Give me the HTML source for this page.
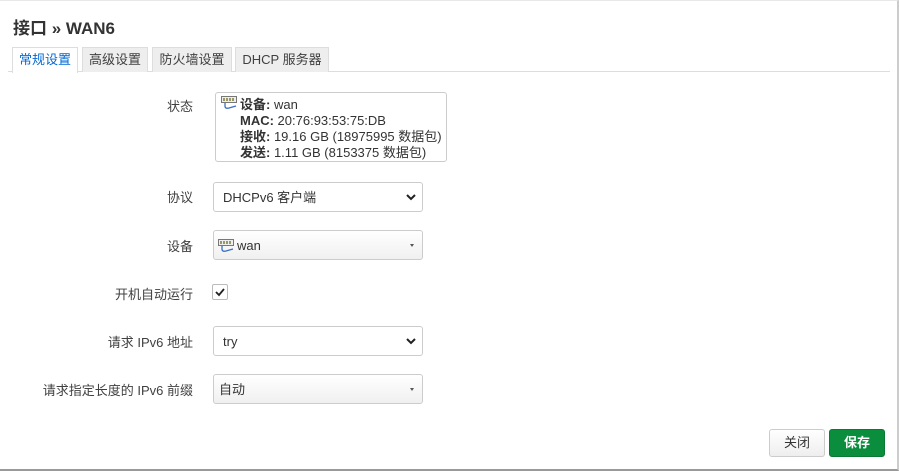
<!DOCTYPE html>
<html><head><meta charset="utf-8"><style>
*{box-sizing:border-box;margin:0;padding:0}
body{width:899px;height:472px;background:#fff;font-family:"Liberation Sans","Noto Sans CJK SC",sans-serif;font-size:13px;color:#404040;position:relative;overflow:hidden}
.frame{position:absolute;left:0;top:0;width:899px;height:471px;border-top:1px solid #e8e8e8;border-right:2px solid #ccc;border-bottom:2px solid #999}
h2{position:absolute;left:13px;top:14px;font-size:17px;font-weight:bold;color:#333}
.tabs{position:absolute;left:8px;top:47px;right:9px;height:25px;border-bottom:1px solid #ddd}
.tab{position:absolute;top:0;height:25px;border:1px solid #ddd;border-bottom:none;background:#eee;font-size:13px;line-height:24px;text-align:center;color:#404040}
.tab.a{background:#fff;color:#0069d6;height:26px}
.lbl{position:absolute;right:706px;font-size:13px;color:#404040}
.box{position:absolute;left:215px;top:92px;width:232px;height:70px;border:1px solid #ccc;border-radius:3px;padding:4px 0 0 24px;line-height:16px;font-size:13px;color:#333}
.sel{position:absolute;left:213px;width:210px;height:30px;border:1px solid #ccc;border-radius:3px;background:linear-gradient(#fff,#f0f0f0);font-size:13px;line-height:29px;padding-left:9px;color:#333}
.sel.n{background:#fff;padding-left:9px}
.car{position:absolute;right:8px;top:13px;width:0;height:0;border-left:2.5px solid transparent;border-right:2.5px solid transparent;border-top:3px solid #555}
.chev{position:absolute;right:6px;top:9px}
.btn{position:absolute;top:429px;height:28px;border-radius:3px;font-size:13px;line-height:26px;text-align:center}
</style></head><body>
<div class="frame"></div>
<h2>接口 » WAN6</h2>
<div class="tabs">
<div class="tab a" style="left:4px;width:66px">常规设置</div>
<div class="tab" style="left:74px;width:66px">高级设置</div>
<div class="tab" style="left:144px;width:80px">防火墙设置</div>
<div class="tab" style="left:227px;width:94px">DHCP 服务器</div>
</div>
<div class="lbl" style="top:96px">状态</div>
<svg style="position:absolute;left:221px;top:96px" width="16" height="14" viewBox="0 0 16 14"><rect x="0.5" y="0.5" width="15" height="6" fill="#eee" stroke="#777"/><rect x="2" y="2" width="2" height="3" fill="#996"/><rect x="5" y="2" width="2" height="3" fill="#996"/><rect x="8" y="2" width="2" height="3" fill="#996"/><rect x="11" y="2" width="2" height="3" fill="#996"/><path d="M4 7 L4 10 Q4 13 8 12 L15 10" stroke="#3b6fc0" stroke-width="1.3" fill="none"/></svg>
<div class="box"><b>设备:</b> wan<br><b>MAC:</b> 20:76:93:53:75:DB<br><b>接收:</b> 19.16 GB (18975995 数据包)<br><b>发送:</b> 1.11 GB (8153375 数据包)</div>
<div class="lbl" style="top:187px">协议</div>
<div class="sel n" style="top:182px">DHCPv6 客户端<svg class="chev" width="10" height="10" viewBox="0 0 10 10"><path d="M1 3 L5 7 L9 3" stroke="#222" stroke-width="2" fill="none"/></svg></div>
<div class="lbl" style="top:236px">设备</div>
<div class="sel" style="top:230px;padding-left:23px">wan<span class="car"></span>
<svg style="position:absolute;left:4px;top:8px" width="16" height="14" viewBox="0 0 16 14"><rect x="0.5" y="0.5" width="15" height="6" fill="#eee" stroke="#777"/><rect x="2" y="2" width="2" height="3" fill="#996"/><rect x="5" y="2" width="2" height="3" fill="#996"/><rect x="8" y="2" width="2" height="3" fill="#996"/><rect x="11" y="2" width="2" height="3" fill="#996"/><path d="M4 7 L4 10 Q4 13 8 12 L15 10" stroke="#3b6fc0" stroke-width="1.3" fill="none"/></svg></div>
<div class="lbl" style="top:284px">开机自动运行</div>
<div style="position:absolute;left:212px;top:284px;width:16px;height:16px;border:1px solid #bbb;border-radius:2px;background:#fff"><svg width="14" height="14" viewBox="0 0 14 14"><path d="M3 7 L6 10 L11 4" stroke="#222" stroke-width="1.8" fill="none"/></svg></div>
<div class="lbl" style="top:332px">请求 IPv6 地址</div>
<div class="sel n" style="top:326px">try<svg class="chev" width="10" height="10" viewBox="0 0 10 10"><path d="M1 3 L5 7 L9 3" stroke="#222" stroke-width="2" fill="none"/></svg></div>
<div class="lbl" style="top:380px">请求指定长度的 IPv6 前缀</div>
<div class="sel" style="top:374px;padding-left:5px">自动<span class="car"></span></div>
<div class="btn" style="left:769px;width:56px;border:1px solid #ccc;background:linear-gradient(#fff,#eee);color:#333">关闭</div>
<div class="btn" style="left:829px;width:56px;border:1px solid #0a7a33;background:#0a8d3c;color:#fff;font-weight:bold">保存</div>
</body></html>
